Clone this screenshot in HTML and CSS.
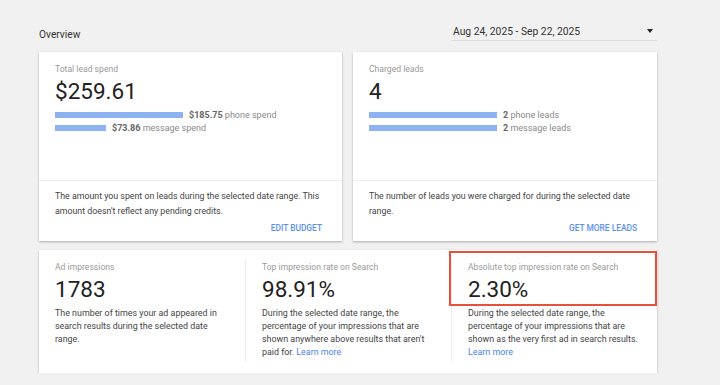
FILE: index.html
```html
<!DOCTYPE html>
<html lang="en">
<head>
  <meta charset="UTF-8">
  <meta name="viewport" content="width=device-width, initial-scale=1.0">
  <title>Overview - Lead Performance</title>
  <link rel="stylesheet" href="styles.css">
</head>
<body>
  <div class="page">
    <!-- Header -->
    <div class="header">
      <div class="title">Overview</div>
      <div class="date-picker">
        <span>Aug 24, 2025 - Sep 22, 2025</span>
        <span class="caret"></span>
      </div>
    </div>

    <!-- Top cards -->
    <div class="top-row">
      <div class="card">
        <div class="card-main">
          <div class="label">Total lead spend</div>
          <div class="big">$259.61</div>
          <div class="bar-row">
            <div class="bar" style="width: 128px"></div>
            <span><b>$185.75</b> phone spend</span>
          </div>
          <div class="bar-row">
            <div class="bar" style="width: 51px"></div>
            <span><b>$73.86</b> message spend</span>
          </div>
        </div>
        <div class="card-foot">
          <p>The amount you spent on leads during the selected date range. This amount doesn't reflect any pending credits.</p>
          <a class="action" href="#">Edit budget</a>
        </div>
      </div>

      <div class="card">
        <div class="card-main">
          <div class="label">Charged leads</div>
          <div class="big">4</div>
          <div class="bar-row">
            <div class="bar" style="width: 128px"></div>
            <span><b>2</b> phone leads</span>
          </div>
          <div class="bar-row">
            <div class="bar" style="width: 128px"></div>
            <span><b>2</b> message leads</span>
          </div>
        </div>
        <div class="card-foot">
          <p>The number of leads you were charged for during the selected date range.</p>
          <a class="action" href="#">Get more leads</a>
        </div>
      </div>
    </div>

    <!-- Impressions card -->
    <div class="card stats">
      <div class="stat">
        <div class="label">Ad impressions</div>
        <div class="big">1783</div>
        <p>The number of times your ad appeared in search results during the selected date range.</p>
      </div>
      <div class="stat">
        <div class="label">Top impression rate on Search</div>
        <div class="big">98.91%</div>
        <p>During the selected date range, the percentage of your impressions that are shown anywhere above results that aren't paid for. <a href="#">Learn more</a></p>
      </div>
      <div class="stat">
        <div class="label">Absolute top impression rate on Search</div>
        <div class="big">2.30%</div>
        <p>During the selected date range, the percentage of your impressions that are shown as the very first ad in search results. <a href="#">Learn more</a></p>
      </div>
      <div class="highlight"></div>
    </div>
  </div>
</body>
</html>
```

FILE: styles.css
```css
body {
  font-family: Roboto, "Liberation Sans", Arial, sans-serif;
  background-color: #f1f1f1;
  margin: 0;
  padding: 0;
  color: #3c3c3c;
}

.page {
  width: 618px;
  padding: 22px 0 0 39px;
}

/* Header */
.header {
  display: flex;
  justify-content: space-between;
  align-items: flex-end;
  height: 19px;
  margin-bottom: 11px;
}

.title {
  font-size: 10.2px;
  color: #333;
  line-height: 12px;
}

.date-picker {
  width: 204px;
  height: 18px;
  padding-left: 2px;
  display: flex;
  align-items: center;
  justify-content: space-between;
  border-bottom: 1px solid #dedede;
  font-size: 10.3px;
  color: #333;
}

.caret {
  width: 0;
  height: 0;
  border-left: 3.5px solid transparent;
  border-right: 3.5px solid transparent;
  border-top: 4px solid #222;
  margin-right: 4px;
}

/* Cards */
.top-row {
  display: flex;
  gap: 11px;
  margin-bottom: 9px;
}

.card {
  background-color: #ffffff;
  box-shadow: 0 1px 2px rgba(0, 0, 0, 0.22), 0 1px 3px rgba(0, 0, 0, 0.08);
}

.top-row .card {
  width: 303px;
  height: 189px;
  display: flex;
  flex-direction: column;
}

.top-row .card + .card {
  width: 304px;
}

.card-main {
  height: 129px;
  box-sizing: border-box;
  padding: 11px 16px 0;
  border-bottom: 1px solid #eeeeee;
}

.label {
  font-size: 8.6px;
  line-height: 12px;
  color: #9a9a9a;
}

.big {
  font-size: 22.5px;
  line-height: 26px;
  color: #222;
  margin-top: 3px;
}

.bar-row {
  display: flex;
  align-items: center;
  height: 13px;
  font-size: 9px;
  color: #8a8a8a;
}

.card-main .big + .bar-row {
  margin-top: 4px;
}

.bar-row b {
  color: #666;
  font-weight: 700;
}

.bar {
  height: 6px;
  background-color: #8db2f2;
  margin-right: 6px;
}

.card-foot {
  flex: 1;
  padding: 8px 14px 0 16px;
  display: flex;
  flex-direction: column;
}

.card-foot p {
  margin: 0;
  font-size: 8.8px;
  line-height: 15px;
  color: #444;
}

.action {
  align-self: flex-end;
  margin: 2px 6px 0 0;
  font-size: 8.4px;
  font-weight: 500;
  text-transform: uppercase;
  color: #5b91f3;
  text-decoration: none;
  line-height: 14px;
}

/* Impressions */
.stats {
  position: relative;
  height: 123px;
  display: grid;
  grid-template-columns: repeat(3, 1fr);
}

.stat {
  padding: 1px 16px 0;
  margin: 10px 0 11px;
}

.stat + .stat {
  border-left: 1px solid #ececec;
}

.stat p {
  margin: 5px 0 0;
  font-size: 8.9px;
  line-height: 13px;
  color: #444;
}

.stat a {
  color: #4a84f2;
  text-decoration: none;
}

.highlight {
  position: absolute;
  left: 410px;
  top: 1px;
  width: 204px;
  height: 51px;
  border: 2px solid #e8503b;
}
```
